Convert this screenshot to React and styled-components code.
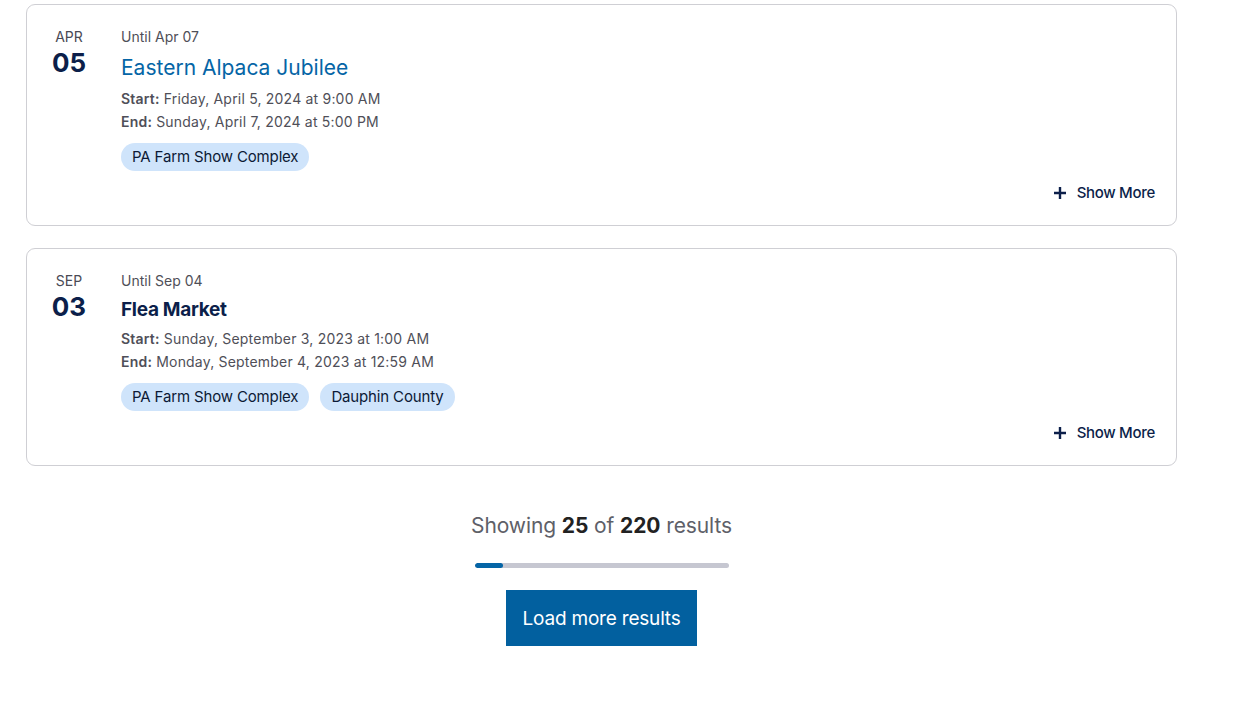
import styled, { createGlobalStyle } from 'styled-components';

const GlobalStyle = createGlobalStyle`
  body {
    margin: 0;
    background: #fff;
    font-family: Inter, 'Noto Sans', sans-serif;
    color: #222;
  }
`;

const Page = styled.main`
  width: 1151px;
  padding: 4px 0 40px 26px;
`;

const List = styled.div`
  display: flex;
  flex-direction: column;
  gap: 22px;
`;

const Card = styled.article`
  display: flex;
  border: 1px solid #cfcfd4;
  border-radius: 9px;
  padding: 22px 21px 22px 20px;
`;

const DateCol = styled.div`
  width: 44px;
  margin-right: 30px;
  display: flex;
  flex-direction: column;
  align-items: center;
`;

const Month = styled.span`
  font-size: 14px;
  line-height: 20px;
  color: #4a4a55;
`;

const Day = styled.span`
  font-size: 26px;
  line-height: 32px;
  font-weight: 700;
  color: #0c1f4a;
`;

const Body = styled.div`
  flex: 1;
  display: flex;
  flex-direction: column;
`;

const Until = styled.div`
  font-size: 14px;
  line-height: 20px;
  color: #4f4f58;
`;

const Title = styled.h3`
  margin: 6px 0 4px;
  font-size: ${({ $link }) => ($link ? '21px' : '19px')};
  line-height: ${({ $link }) => ($link ? '30px' : '26px')};
  font-weight: ${({ $link }) => ($link ? 400 : 700)};
  color: ${({ $link }) => ($link ? '#0565a6' : '#0c1f4a')};
  letter-spacing: ${({ $link }) => ($link ? '0' : '-0.3px')};
`;

const Line = styled.div`
  font-size: 14px;
  line-height: 23px;
  color: #4f4f58;
  letter-spacing: 0.2px;

  & b {
    font-weight: 600;
  }
`;

const Chips = styled.div`
  display: flex;
  gap: 11px;
  margin-top: 10px;
`;

const Chip = styled.span`
  height: 28px;
  padding: 0 11px;
  border-radius: 14px;
  background: #cfe4fb;
  color: #0c1a36;
  font-size: 15px;
  line-height: 28px;
  letter-spacing: -0.15px;
`;

const Footer = styled.div`
  display: flex;
  justify-content: flex-end;
  margin-top: 12px;
`;

const MoreButton = styled.button`
  display: flex;
  align-items: center;
  gap: 10px;
  border: 0;
  background: none;
  padding: 0;
  font-family: inherit;
  font-size: 15px;
  line-height: 20px;
  font-weight: 500;
  color: #0c1f4a;
  letter-spacing: -0.3px;
`;

const Results = styled.section`
  display: flex;
  flex-direction: column;
  align-items: center;
  margin-top: 45px;
`;

const Count = styled.p`
  margin: 0;
  font-size: 21px;
  line-height: 30px;
  color: #5e6068;
  letter-spacing: -0.1px;

  & b {
    color: #222;
    font-weight: 700;
  }
`;

const Track = styled.div`
  width: 254px;
  height: 5px;
  margin-top: 22px;
  border-radius: 3px;
  background: #c6c7d1;
  overflow: hidden;
`;

const Fill = styled.div`
  height: 100%;
  border-radius: 3px;
  background: #0565a6;
`;

const LoadButton = styled.button`
  margin-top: 22px;
  height: 56px;
  padding: 0 17px;
  border: 0;
  background: #02609f;
  color: #fff;
  font-family: inherit;
  font-size: 19px;
  letter-spacing: -0.2px;
`;

const events = [
  {
    month: 'APR',
    day: '05',
    until: 'Until Apr 07',
    title: 'Eastern Alpaca Jubilee',
    link: true,
    start: 'Friday, April 5, 2024 at 9:00 AM',
    end: 'Sunday, April 7, 2024 at 5:00 PM',
    tags: ['PA Farm Show Complex'],
  },
  {
    month: 'SEP',
    day: '03',
    until: 'Until Sep 04',
    title: 'Flea Market',
    link: false,
    start: 'Sunday, September 3, 2023 at 1:00 AM',
    end: 'Monday, September 4, 2023 at 12:59 AM',
    tags: ['PA Farm Show Complex', 'Dauphin County'],
  },
];

const PlusIcon = () => (
  <svg width="14" height="14" viewBox="0 0 14 14">
    <path d="M7 1v12M1 7h12" stroke="#0c1f4a" strokeWidth="2.4" />
  </svg>
);

const App = () => {
  const shown = 25;
  const total = 220;

  return (
    <Page>
      <GlobalStyle />
      <List>
        {events.map(event => (
          <Card key={event.title}>
            <DateCol>
              <Month>{event.month}</Month>
              <Day>{event.day}</Day>
            </DateCol>
            <Body>
              <Until>{event.until}</Until>
              <Title $link={event.link}>{event.title}</Title>
              <Line>
                <b>Start:</b> {event.start}
              </Line>
              <Line>
                <b>End:</b> {event.end}
              </Line>
              <Chips>
                {event.tags.map(tag => (
                  <Chip key={tag}>{tag}</Chip>
                ))}
              </Chips>
              <Footer>
                <MoreButton>
                  <PlusIcon />
                  Show More
                </MoreButton>
              </Footer>
            </Body>
          </Card>
        ))}
      </List>
      <Results>
        <Count>
          Showing <b>{shown}</b> of <b>{total}</b> results
        </Count>
        <Track>
          <Fill style={{ width: `${(shown / total) * 100}%` }} />
        </Track>
        <LoadButton>Load more results</LoadButton>
      </Results>
    </Page>
  );
};

export default App;
